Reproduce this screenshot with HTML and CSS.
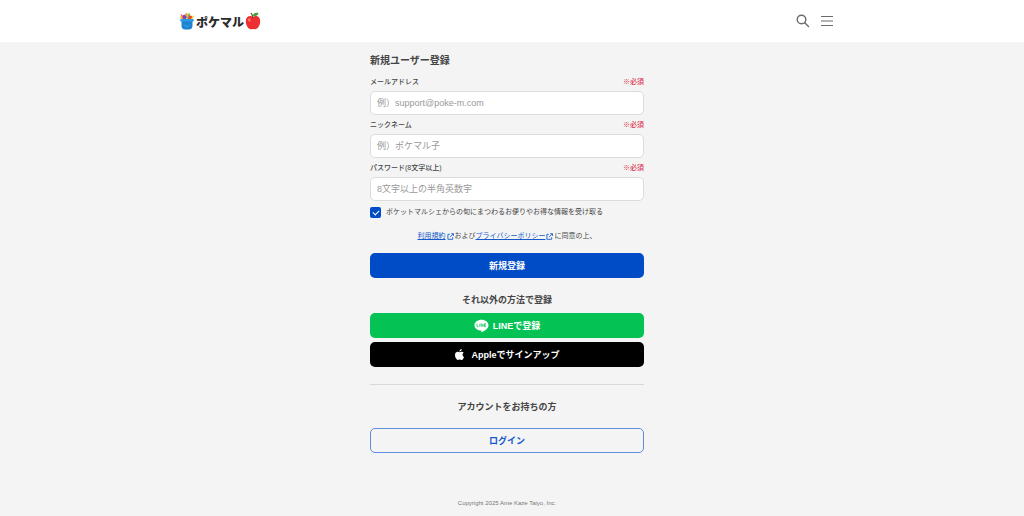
FILE: index.html
```html
<!DOCTYPE html>
<html lang="ja">
<head>
<meta charset="utf-8">
<meta name="viewport" content="width=device-width, initial-scale=1">
<title>新規ユーザー登録</title>
<link rel="stylesheet" href="styles.css">
</head>
<body>
<header class="header">
  <div class="header-inner">
    <a class="logo" href="#">
      <svg class="logo-basket" viewBox="0 0 16 18" aria-hidden="true">
        <path d="M4.500 7 2.200 2.500" stroke="#ef5b9c" stroke-width="1.600"/>
        <circle cx="2.500" cy="5.500" r="1.500" fill="#f6b93b"/>
        <circle cx="5.600" cy="5" r="2.200" fill="#8b3fa8"/>
        <circle cx="7.400" cy="2.500" r="1.500" fill="#f3a04c"/>
        <path d="M8 7c0-4 1-5.500 2.800-6 .7 2 .2 4-.8 6z" fill="#8ac43f"/>
        <circle cx="11.300" cy="5.600" r="2" fill="#e8452f"/>
        <path d="m11.800 7 2.400-3.800 1 .8L13.200 7.500z" fill="#f2cf3a"/>
        <path d="M2.500 8.500h11v5c0 2.500-1.500 4-3.500 4H6c-2 0-3.500-1.500-3.500-4z" fill="#1c82d2"/>
        <rect x="1.200" y="7" width="13.600" height="2.600" rx="1.200" fill="#2b9be6"/>
        <path d="M5 12.500c1 2.400 5 2.400 6 0" fill="none" stroke="#4ba8e8" stroke-width=".8"/>
      </svg>
      <span class="logo-text">ポケマル</span>
      <svg class="logo-apple" viewBox="0 0 16 18" aria-hidden="true">
        <path d="M8 5C5 2.800.8 4.500.8 9.300c0 4 2.500 8 5 8 1 0 1.400-.4 2.200-.4s1.200.4 2.200.4c2.500 0 5-4 5-8C15.200 4.500 11 2.800 8 5z" fill="#ee2f32"/>
        <path d="M8 6C7.800 4 7.200 2.500 6 1.200" fill="none" stroke="#70421f" stroke-width="1.200"/>
        <path d="M8 4c0-2.500 2.200-3.700 5.500-3C13 3.400 11 4.600 8 4z" fill="#43a33b"/>
        <ellipse cx="4.300" cy="8" rx="1.400" ry="1.800" fill="#f9746c"/>
      </svg>
    </a>
    <div class="header-actions">
      <button class="icon-button" type="button" aria-label="検索">
        <svg viewBox="0 0 14 14" fill="none" stroke="#6b6b6b" stroke-width="1.400" stroke-linecap="round"><circle cx="5.500" cy="5.500" r="4.300"/><path d="m8.800 8.800 3.700 3.700"/></svg>
      </button>
      <button class="icon-button" type="button" aria-label="メニュー">
        <svg viewBox="0 0 14 14" fill="none" stroke="#6b6b6b" stroke-width="1.200"><path d="M1 2.500h12M1 7h12M1 11.500h12"/></svg>
      </button>
    </div>
  </div>
</header>
<main class="main">
  <div class="content">
    <form class="signup">
      <h1 class="title">新規ユーザー登録</h1>
      <div class="field">
        <div class="field-head"><label for="email">メールアドレス</label><span class="required">※必須</span></div>
        <input class="input" id="email" type="email" placeholder="例）support@poke-m.com">
      </div>
      <div class="field">
        <div class="field-head"><label for="nickname">ニックネーム</label><span class="required">※必須</span></div>
        <input class="input" id="nickname" type="text" placeholder="例）ポケマル子">
      </div>
      <div class="field">
        <div class="field-head"><label for="password">パスワード(8文字以上)</label><span class="required">※必須</span></div>
        <input class="input" id="password" type="password" placeholder="8文字以上の半角英数字">
      </div>
      <div class="optin">
        <input class="checkbox" id="news" type="checkbox" checked>
        <label for="news">ポケットマルシェからの旬にまつわるお便りやお得な情報を受け取る</label>
      </div>
      <p class="terms"><a class="link" href="#">利用規約</a><svg class="external" viewBox="0 0 8 8"><path d="M3.200 1.500H1v5.700h5.500V4.800M4.800.8h2.600v2.600M7.200 1 3.500 4.700"/></svg><span>および</span><a class="link" href="#">プライバシーポリシー</a><svg class="external" viewBox="0 0 8 8"><path d="M3.200 1.500H1v5.700h5.500V4.800M4.800.8h2.600v2.600M7.200 1 3.500 4.700"/></svg><span>に同意の上、</span></p>
      <button class="button primary" type="submit">新規登録</button>
    </form>
    <section class="other">
      <h2 class="subtitle">それ以外の方法で登録</h2>
      <div class="socials">
        <button class="button line" type="button">
          <svg class="line-icon" viewBox="0 0 16 14" aria-hidden="true"><path d="M8 .3c4.200 0 7.500 2.600 7.500 5.900 0 3-3 5.300-7.200 7.500-.6.200-.5-.3-.4-.8l.1-1C3.800 11.900.5 9.500.5 6.200.5 2.900 3.800.3 8 .3z" fill="#fff"/><path d="M3.200 4.500v3.200h1.600M6.200 4.500v3.200M7.700 7.700V4.600l2 3V4.500M12.800 4.600h-1.600v3.100h1.600M11.200 6.100h1.500" fill="none" stroke="#06c152" stroke-width=".8"/></svg>
          <span>LINEで登録</span>
        </button>
        <button class="button apple" type="button">
          <svg class="apple-icon" viewBox="0 0 24 24" fill="#fff" aria-hidden="true"><path d="M12.150 6.900c-.95 0-2.420-1.080-3.960-1.040-2.040.03-3.910 1.180-4.960 3.010-2.120 3.680-.55 9.100 1.520 12.090 1.010 1.450 2.210 3.090 3.790 3.040 1.520-.07 2.090-.99 3.940-.99 1.830 0 2.350.99 3.960.95 1.640-.03 2.680-1.480 3.680-2.950 1.160-1.690 1.640-3.330 1.660-3.420-.04-.01-3.180-1.220-3.220-4.860-.03-3.040 2.480-4.490 2.600-4.560-1.430-2.090-3.620-2.320-4.390-2.380-2-.16-3.680 1.090-4.620 1.090zM15.530 3.830c.84-1.010 1.400-2.430 1.250-3.830-1.210.05-2.660.81-3.530 1.820-.78.900-1.450 2.340-1.270 3.710 1.330.1 2.710-.69 3.550-1.700"/></svg>
          <span>Appleでサインアップ</span>
        </button>
      </div>
    </section>
    <section class="login">
      <h2 class="subtitle">アカウントをお持ちの方</h2>
      <button class="button outline" type="button">ログイン</button>
    </section>
  </div>
</main>
<footer class="footer">Copyright 2025 Ame Kaze Taiyo, Inc.</footer>
</body>
</html>
```
FILE: styles.css
```css
* {
  box-sizing: border-box;
}

body {
  margin: 0;
  background: #f4f4f4;
  color: #444;
  font: 7px/12px "Liberation Sans", "Noto Sans CJK JP", sans-serif;
}

h1,
h2,
p {
  margin: 0;
}

button,
input {
  font-family: inherit;
}

.header,
.main,
.footer {
  padding-right: 10px;
}

.header {
  background: #fff;
}

.header-inner {
  display: flex;
  align-items: center;
  justify-content: space-between;
  max-width: 656px;
  height: 42px;
  margin: 0 auto;
}

.logo {
  display: flex;
  align-items: center;
  color: #2b2b2b;
  text-decoration: none;
}

.logo-basket,
.logo-apple {
  width: 16px;
  height: 18px;
}

.logo-text {
  padding: 4px 1px 0;
  font-size: 12px;
  font-weight: 900;
  line-height: 16px;
}

.header-actions {
  display: flex;
  gap: 10px;
  padding-right: 1px;
}

.icon-button {
  width: 14px;
  height: 14px;
  padding: 0;
  border: 0;
  background: none;
}

.icon-button svg {
  display: block;
}

.content {
  max-width: 274px;
  margin: 0 auto;
  padding-top: 9px;
}

.title {
  margin-bottom: 5px;
  font-size: 10px;
  line-height: 20px;
}

.field {
  margin-bottom: 4px;
}

.field-head {
  display: flex;
  justify-content: space-between;
  margin-bottom: 3px;
  font-weight: 500;
}

.required {
  color: #dc3650;
}

.input {
  display: block;
  width: 100%;
  height: 24px;
  padding: 0 6px;
  border: 1px solid #dcdcdc;
  border-radius: 5px;
  background: #fff;
  color: #444;
  font-size: 9px;
}

.input::placeholder {
  color: #999;
}

.optin {
  display: flex;
  align-items: center;
  gap: 5px;
  margin-top: 5px;
}

.checkbox {
  appearance: none;
  display: grid;
  place-items: center;
  width: 11px;
  height: 11px;
  margin: 0;
  border-radius: 2px;
  background: #004cc7;
}

.checkbox:checked::before {
  content: "";
  width: 5px;
  height: 3px;
  border: solid #fff;
  border-width: 0 0 1px 1px;
  transform: rotate(-45deg);
}

.terms {
  display: flex;
  align-items: center;
  justify-content: center;
  margin: 12px 0 11px;
}

.link {
  color: #1559cb;
  text-decoration: underline;
}

.external {
  width: 7px;
  height: 7px;
  margin: 0 1px;
  fill: none;
  stroke: #1559cb;
}

.button {
  display: flex;
  align-items: center;
  justify-content: center;
  gap: 4px;
  width: 100%;
  height: 25px;
  padding: 0;
  border: 0;
  border-radius: 5px;
  color: #fff;
  font-size: 9px;
  font-weight: 700;
}

.primary {
  background: #004cc7;
}

.subtitle {
  font-size: 9px;
  line-height: 16px;
  text-align: center;
}

.other {
  margin-top: 14px;
}

.socials {
  display: grid;
  gap: 4px;
  margin-top: 5px;
}

.line {
  background: #04c254;
}

.apple {
  gap: 6px;
  background: #000;
}

.line-icon {
  width: 15px;
  height: 14px;
}

.apple-icon {
  width: 11px;
  height: 11px;
}

.login {
  margin-top: 17px;
  padding-top: 14px;
  border-top: 1px solid #d8d8d8;
}

.outline {
  margin-top: 13px;
  border: 1px solid #5c8fdd;
  background: transparent;
  color: #1559cb;
}

.footer {
  padding-top: 44px;
  padding-bottom: 7px;
  color: #777;
  font-size: 6px;
  text-align: center;
}
```
